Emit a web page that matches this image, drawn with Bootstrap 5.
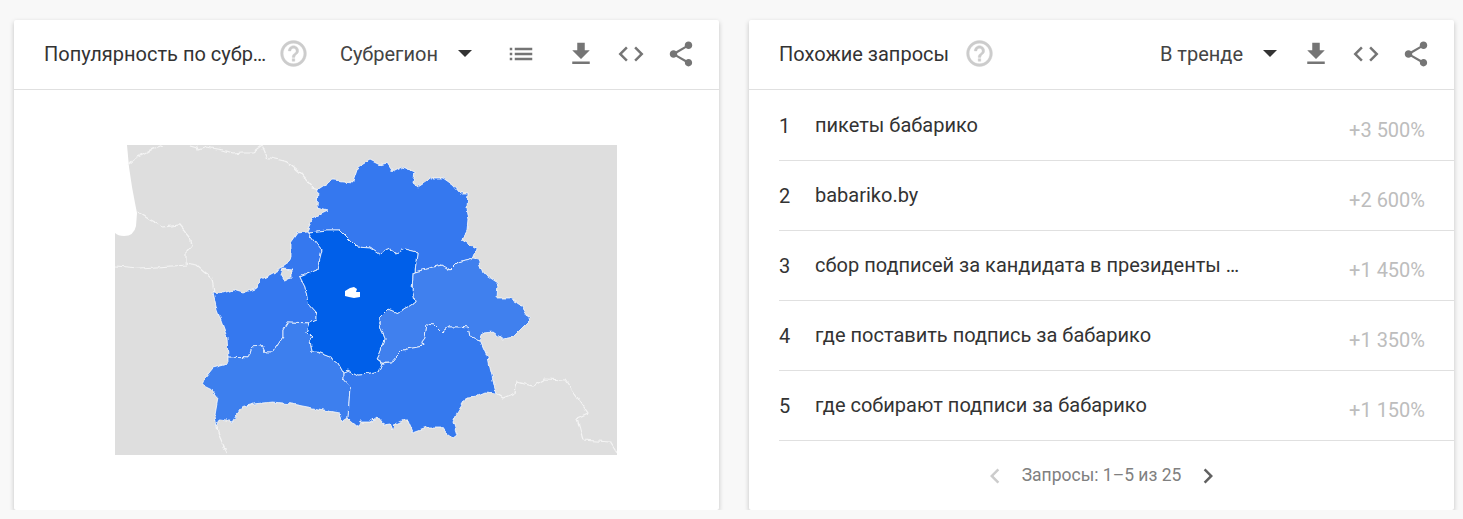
<!DOCTYPE html>
<html lang="ru">
<head>
    <meta charset="UTF-8">
    <meta name="viewport" content="width=device-width, initial-scale=1.0">
    <title>Популярность по субрегионам</title>
    <link href="https://cdn.jsdelivr.net/npm/bootstrap@5.3.3/dist/css/bootstrap.min.css" rel="stylesheet">
    <style>
        body { background: #f8f8f8; font-family: Roboto, "Liberation Sans", sans-serif; color: #333; overflow: hidden; }
        .page-wrap { padding: 20px 9px 0 14px; gap: 30px; }
        .trend-card { width: 705px; height: 490px; border: 0; border-radius: 2px; box-shadow: 0 2px 5px rgba(0,0,0,.22); }
        .trend-head { height: 70px; padding: 0 13px 2px 30px; border-bottom: 1px solid #e0e0e0; font-size: 20px; }
        .trend-title { white-space: nowrap; }
        .help-ico { width: 31px; height: 31px; fill: #ccc; stroke: #ccc; stroke-width: .3; margin-left: 12px; }
        .help-wide { margin-left: 15px; }
        .picker { color: #444; }
        .caret-ico { width: 14px; height: 7px; fill: #333; margin-left: 20px; }
        .tool { width: 50px; height: 50px; fill: #757575; }
        .tool svg { width: 30px; height: 30px; }
        .tool-list { margin-left: 24px; margin-right: 10px; }
        .tool-first { margin-left: 14px; }
        .map-box { height: 419px; padding-right: 1px; }
        .map-svg { width: 502px; height: 310px; display: block; }
        .row-list { padding-top: 1px; }
        .trend-row { height: 70px; margin-left: 30px; border-bottom: 1px solid #e0e0e0; font-size: 20px; padding-right: 29px; }
        .row-num { width: 36px; }
        .row-text { flex: 1; position: relative; top: -1px; }
        .row-val { color: #bdbdbd; position: relative; top: 4px; }
        .trend-foot { height: 69px; color: #808080; font-size: 17.5px; }
        .trend-foot svg { width: 30px; height: 30px; }
        .chev-off { fill: #ccc; margin-right: 12px; }
        .chev-on { fill: #616161; margin-left: 12px; }
    </style>
</head>
<body>
    <div class="d-flex page-wrap">
        <div class="card trend-card">
            <div class="d-flex align-items-center trend-head">
                <div class="trend-title">Популярность по субр…</div>
                <svg class="help-ico" viewBox="0 0 24 24"><path d="M11 18h2v-2h-2v2zm1-16C6.48 2 2 6.48 2 12s4.48 10 10 10 10-4.48 10-10S17.52 2 12 2zm0 18c-4.41 0-8-3.59-8-8s3.59-8 8-8 8 3.59 8 8-3.59 8-8 8zm0-14c-2.21 0-4 1.79-4 4h2c0-1.1.9-2 2-2s2 .9 2 2c0 2-3 1.75-3 5h2c0-2.25 3-2.5 3-5 0-2.21-1.79-4-4-4z"/></svg>
                <div class="d-flex align-items-center ms-auto">
                    <span class="picker">Субрегион</span>
                    <svg class="caret-ico" viewBox="0 0 14 7"><path d="M0 0h14L7 7z"/></svg>
                    <div class="tool tool-list d-flex align-items-center justify-content-center"><svg viewBox="0 0 24 24"><path d="M3 13h2v-2H3v2zm0 4h2v-2H3v2zm0-8h2V7H3v2zm4 4h14v-2H7v2zm0 4h14v-2H7v2zM7 7v2h14V7H7z"/></svg></div>
                    <div class="tool d-flex align-items-center justify-content-center"><svg viewBox="0 0 24 24"><path d="M19 9h-4V3H9v6H5l7 7 7-7zM5 18v2h14v-2H5z"/></svg></div>
                    <div class="tool d-flex align-items-center justify-content-center"><svg viewBox="0 0 24 24"><path d="M9.4 16.6L4.8 12l4.6-4.6L8 6l-6 6 6 6 1.4-1.4zm5.2 0l4.6-4.6-4.6-4.6L16 6l6 6-6 6-1.4-1.4z"/></svg></div>
                    <div class="tool d-flex align-items-center justify-content-center"><svg viewBox="0 0 24 24"><path d="M18 16.08c-.76 0-1.44.3-1.96.77L8.91 12.7c.05-.23.09-.46.09-.7s-.04-.47-.09-.7l7.05-4.11c.54.5 1.25.81 2.04.81 1.66 0 3-1.34 3-3s-1.34-3-3-3-3 1.34-3 3c0 .24.04.47.09.7L8.04 9.81C7.5 9.31 6.79 9 6 9c-1.66 0-3 1.34-3 3s1.34 3 3 3c.79 0 1.5-.31 2.04-.81l7.12 4.16c-.05.21-.08.43-.08.65 0 1.61 1.31 2.92 2.92 2.92 1.61 0 2.92-1.31 2.92-2.92s-1.31-2.92-2.92-2.92z"/></svg></div>
                </div>
            </div>
            <div class="map-box d-flex align-items-center justify-content-center">
                <!-- viewBox uses the screenshot's page coordinates -->
                <svg class="map-svg" viewBox="115 145 502 310">
                    <defs>
                        <filter id="rough" x="-5%" y="-5%" width="110%" height="110%">
                            <feTurbulence type="fractalNoise" baseFrequency="0.14" numOctaves="2" seed="4"/>
                            <feDisplacementMap in="SourceGraphic" scale="5" xChannelSelector="R" yChannelSelector="G"/>
                            <feGaussianBlur stdDeviation="0.25"/>
                        </filter>
                    </defs>
                    <rect x="115" y="145" width="502" height="310" fill="#dedede"/>
                    <path fill="#fff" d="M115,145 L127,145 129,167 132,187 135,203 137,213 136,226 Q134,236 124,236 Q118,236 115,233 Z"/>
                    <g filter="url(#rough)">
                        <g fill="none" stroke="#f4f4f4" stroke-width="1.2">
                            <polyline points="128,165 137,157 150,150 163,145"/>
                            <polyline points="190,145 197,147 198,150 207,147 223,150 233,153 243,152 253,152 262,145 267,157 287,162 300,173 313,188 320,190"/>
                            <polyline points="138,212 150,220 163,227 180,225 190,237 192,245 186,252 186,263 197,265 212,278 214,292"/>
                            <polyline points="115,266 140,268 188,265"/>
                            <polyline points="216,420 218,433 227,453"/>
                            <polyline points="497,394 503,398 515,393 517,382 533,386 545,379 565,380 577,397 588,413 577,418 583,440 610,442 617,453"/>
                        </g>
                        <g stroke="#fff" stroke-width="1" stroke-opacity=".75" stroke-linejoin="round">
                            <!-- Витебская -->
                            <polygon fill="#3578ef" points="307,231 313,218 328,211 317,208 318,190 333,180 353,182 358,167 370,160 380,165 387,163 393,172 403,167 415,172 413,183 418,187 432,178 443,178 453,185 460,193 468,193 467,208 469,220 468,230 462,240 477,249 473,259 457,263 450,270 442,265 430,268 415,272 417,252 405,249 397,253 387,249 380,255 370,248 357,247 340,230 327,230 308,232"/>
                            <!-- Гродненская -->
                            <path fill="#3578ef" fill-rule="evenodd" d="M308,232 L297,233 290,243 290,257 283,268 273,273 260,280 257,288 243,293 233,290 223,293 213,292 217,310 227,337 228,357 248,358 252,347 262,346 265,352 273,352 283,337 283,330 288,322 310,323 317,320 317,313 308,303 305,287 300,277 317,270 322,250 Z M283,269 L292,270 292,278 284,280 281,275 Z"/>
                            <!-- Брестская -->
                            <polygon fill="#3c7fee" points="228,357 248,358 252,347 262,346 265,352 273,352 283,337 283,330 288,322 310,323 307,332 313,338 310,340 312,352 317,352 330,357 338,363 343,372 343,379 350,387 348,418 342,422 340,413 313,408 292,404 272,402 253,404 242,407 232,422 227,420 220,419 217,427 215,415 218,398 212,390 202,385 205,377 213,367 228,363"/>
                            <!-- Могилёвская -->
                            <polygon fill="#3f80ee" points="415,272 430,268 442,265 450,270 457,263 473,259 478,260 483,273 498,283 497,298 510,298 520,303 530,320 520,330 513,337 503,339 493,332 483,333 480,340 470,337 468,328 457,327 448,327 442,332 435,325 427,324 425,338 422,342 423,346 413,348 403,350 398,355 392,362 382,362 377,359 380,353 385,340 383,333 380,327 380,317 388,309 398,313 415,302 412,290 413,273"/>
                            <!-- Гомельская -->
                            <polygon fill="#3679ee" points="343,372 348,370 357,375 370,374 378,372 382,363 392,362 398,355 403,350 413,348 423,346 422,342 425,338 427,324 435,325 442,332 448,327 457,327 468,328 470,337 480,340 488,358 490,368 495,388 497,394 485,393 478,396 467,397 457,413 453,422 457,435 453,438 448,435 442,427 427,427 413,432 408,420 403,420 395,424 393,430 390,423 383,424 377,417 370,422 360,422 358,427 350,420 348,418 350,387 343,379"/>
                            <!-- Минская -->
                            <polygon fill="#005fe9" points="308,232 327,230 340,230 357,247 370,248 380,255 387,249 397,253 405,249 417,252 415,272 413,273 412,290 415,302 398,313 388,309 380,317 380,327 383,333 385,340 380,353 377,359 382,363 378,372 370,374 357,375 348,370 343,372 338,363 330,357 317,352 312,352 310,340 313,338 307,332 310,323 317,320 317,313 308,303 305,287 300,277 317,270 322,250"/>
                        </g>
                    </g>
                    <polygon fill="#fff" points="345,291 350,288 354,287 357,289 356,292 360,292 360,297 354,298 349,297 345,296"/>
                </svg>
            </div>
        </div>
        <div class="card trend-card">
            <div class="d-flex align-items-center trend-head">
                <div class="trend-title">Похожие запросы</div>
                <svg class="help-ico help-wide" viewBox="0 0 24 24"><path d="M11 18h2v-2h-2v2zm1-16C6.48 2 2 6.48 2 12s4.48 10 10 10 10-4.48 10-10S17.52 2 12 2zm0 18c-4.41 0-8-3.59-8-8s3.59-8 8-8 8 3.59 8 8-3.59 8-8 8zm0-14c-2.21 0-4 1.79-4 4h2c0-1.1.9-2 2-2s2 .9 2 2c0 2-3 1.75-3 5h2c0-2.25 3-2.5 3-5 0-2.21-1.79-4-4-4z"/></svg>
                <div class="d-flex align-items-center ms-auto">
                    <span class="picker">В тренде</span>
                    <svg class="caret-ico" viewBox="0 0 14 7"><path d="M0 0h14L7 7z"/></svg>
                    <div class="tool tool-first d-flex align-items-center justify-content-center"><svg viewBox="0 0 24 24"><path d="M19 9h-4V3H9v6H5l7 7 7-7zM5 18v2h14v-2H5z"/></svg></div>
                    <div class="tool d-flex align-items-center justify-content-center"><svg viewBox="0 0 24 24"><path d="M9.4 16.6L4.8 12l4.6-4.6L8 6l-6 6 6 6 1.4-1.4zm5.2 0l4.6-4.6-4.6-4.6L16 6l6 6-6 6-1.4-1.4z"/></svg></div>
                    <div class="tool d-flex align-items-center justify-content-center"><svg viewBox="0 0 24 24"><path d="M18 16.08c-.76 0-1.44.3-1.96.77L8.91 12.7c.05-.23.09-.46.09-.7s-.04-.47-.09-.7l7.05-4.11c.54.5 1.25.81 2.04.81 1.66 0 3-1.34 3-3s-1.34-3-3-3-3 1.34-3 3c0 .24.04.47.09.7L8.04 9.81C7.5 9.31 6.79 9 6 9c-1.66 0-3 1.34-3 3s1.34 3 3 3c.79 0 1.5-.31 2.04-.81l7.12 4.16c-.05.21-.08.43-.08.65 0 1.61 1.31 2.92 2.92 2.92 1.61 0 2.92-1.31 2.92-2.92s-1.31-2.92-2.92-2.92z"/></svg></div>
                </div>
            </div>
            <div class="row-list">
                <div class="d-flex align-items-center trend-row"><span class="row-num">1</span><span class="row-text">пикеты бабарико</span><span class="row-val">+3 500%</span></div>
                <div class="d-flex align-items-center trend-row"><span class="row-num">2</span><span class="row-text">babariko.by</span><span class="row-val">+2 600%</span></div>
                <div class="d-flex align-items-center trend-row"><span class="row-num">3</span><span class="row-text">сбор подписей за кандидата в президенты …</span><span class="row-val">+1 450%</span></div>
                <div class="d-flex align-items-center trend-row"><span class="row-num">4</span><span class="row-text">где поставить подпись за бабарико</span><span class="row-val">+1 350%</span></div>
                <div class="d-flex align-items-center trend-row"><span class="row-num">5</span><span class="row-text">где собирают подписи за бабарико</span><span class="row-val">+1 150%</span></div>
            </div>
            <div class="d-flex align-items-center justify-content-center trend-foot">
                <svg class="chev-off" viewBox="0 0 24 24"><path d="M15.41 7.41L14 6l-6 6 6 6 1.41-1.41L10.83 12z"/></svg>
                <span>Запросы: 1–5 из 25</span>
                <svg class="chev-on" viewBox="0 0 24 24"><path d="M10 6L8.59 7.41 13.17 12l-4.58 4.59L10 18l6-6z"/></svg>
            </div>
        </div>
    </div>
    <script src="https://cdn.jsdelivr.net/npm/bootstrap@5.3.3/dist/js/bootstrap.bundle.min.js"></script>
</body>
</html>
